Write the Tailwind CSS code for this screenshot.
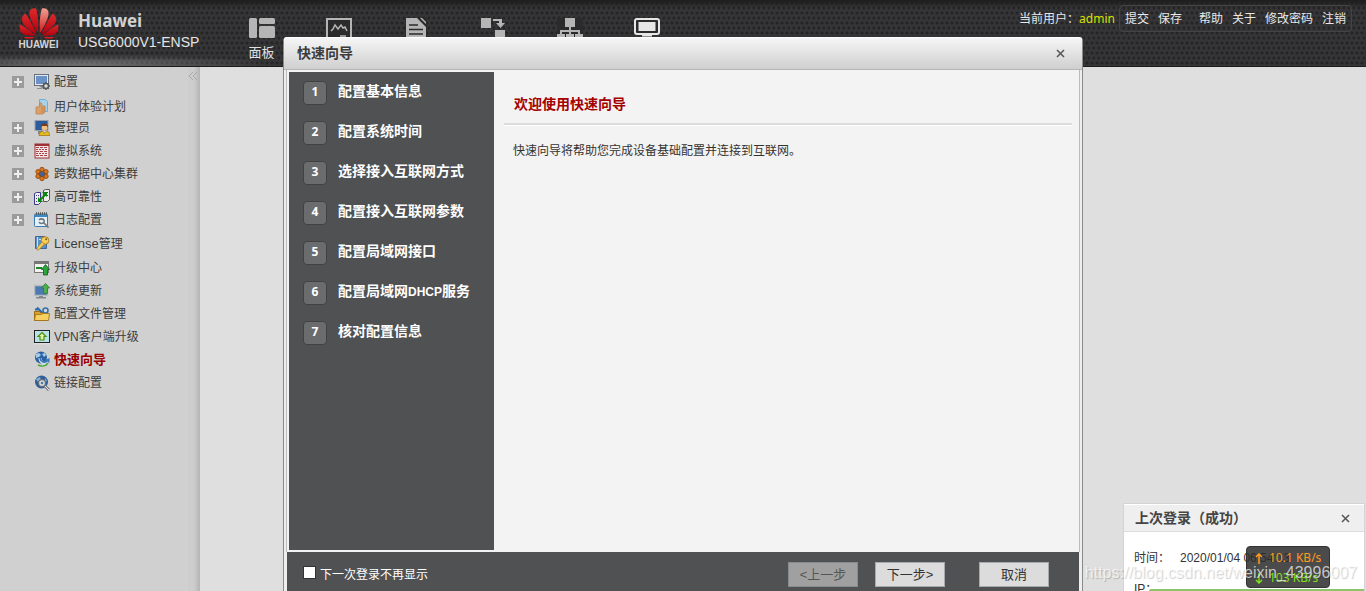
<!DOCTYPE html>
<html lang="zh-CN">
<head>
<meta charset="utf-8">
<title>USG6000V1-ENSP</title>
<script src="https://cdn.jsdelivr.net/npm/@tailwindcss/browser@4"></script>
</head>
<body class="h-screen overflow-hidden relative flex flex-col bg-[#dfdfdf] text-xs text-[#333] font-['Liberation_Sans','Noto_Sans_CJK_SC',sans-serif]">

<header class="h-[67px] shrink-0 flex relative border-b border-[#1c1c1c] bg-[#353537] bg-[linear-gradient(180deg,#1d1d1d,transparent_8px),radial-gradient(ellipse_at_85px_64px,rgba(255,255,255,0.3),transparent_190px),radial-gradient(circle_at_2px_3px,#242425_1px,transparent_2px),radial-gradient(circle_at_4px_8px,#242425_1px,transparent_2px)] bg-[size:100%_100%,100%_100%,5px_10px,5px_10px]">
  <div class="w-[223px] shrink-0 flex pl-[18px]">
    <div class="w-[41px] flex flex-col items-center pt-[7px]">
      <svg class="w-10 h-8" viewBox="0 0 40 32">
        <defs><linearGradient id="r" x1="0" y1="0" x2="0" y2="1"><stop offset="0" stop-color="#dc2a2c"/><stop offset="1" stop-color="#b4000c"/></linearGradient><linearGradient id="p" x1="0" y1="0" x2="0" y2="1"><stop offset="0" stop-color="#f0a090"/><stop offset="1" stop-color="#cc1a1e"/></linearGradient></defs>
        <g fill="url(#r)">
          <path d="M19 26C19.400 18 19.500 8 17 1.500 12.500 0 9.800 3.500 10.600 8 11.500 13 15.500 21 19 26z"/>
          <path d="M21 26C20.600 18 20.500 8 23 1.500c4.500-1.500 7.200 2 6.400 6.500C28.500 13 24.500 21 21 26z" fill="url(#p)"/>
          <path d="M17.600 27.500C15 20.500 10.500 12 6.500 6.500 2.800 8.500 2 13 4.200 16.500 7 20.500 12.500 25 17.600 27.500z"/>
          <path d="M22.400 27.500C25 20.500 29.500 12 33.500 6.500c3.700 2 4.500 6.500 2.300 10C33 20.500 27.500 25 22.400 27.500z"/>
          <path d="M16.500 28.500C12 24.500 5.500 20 .8 17.300 0 21.500 1 25.500 4.500 27.300 8 28.700 13 29 16.500 28.500z"/>
          <path d="M23.500 28.500C28 24.500 34.500 20 39.200 17.300c.8 4.200-.2 8.200-3.700 10C32 28.700 27 29 23.500 28.500z"/>
          <path d="M16 30H4.500c3 2.800 8 2.500 11.500 0z"/><path d="M24 30h11.500c-3 2.800-8 2.500-11.500 0z"/>
        </g>
      </svg>
      <span class="text-[10px] leading-3 font-bold text-[#d5d5d5]">HUAWEI</span>
    </div>
    <div class="pl-[19px] pt-[10px] text-[#e4e4e4]">
      <div class="text-[17px] leading-[22px] font-bold text-[#d2d2d2] font-['Open_Sans',sans-serif]">Huawei</div>
      <div class="text-sm leading-5">USG6000V1-ENSP</div>
    </div>
  </div>
  <nav class="flex text-[13px] text-[#e0e0e0]" aria-label="主菜单">
    <a href="#" class="w-[77px] flex flex-col items-center pt-[18px]">
      <svg class="w-[26px] h-5" viewBox="0 0 26 20" fill="#b5b5b5"><rect width="8" height="20" rx="1.5"/><rect x="10" width="16" height="6" rx="1.5"/><rect x="10" y="8" width="16" height="12" rx="1.5"/></svg>
      <span class="mt-[5px] leading-5">面板</span>
    </a>
    <a href="#" aria-label="监控" class="w-[77px] flex justify-center pt-[18px]">
      <svg class="w-[26px] h-5" viewBox="0 0 26 20" fill="none" stroke="#b5b5b5"><path fill="#2b2b2b" stroke-width="2" d="M1 20V1h24v19"/><path stroke-width="1.500" d="M5 13l2-2 2-4 3 4 3-4 2 3 2-1 2 4M14 18h6"/></svg>
    </a>
    <a href="#" aria-label="策略" class="w-[77px] flex justify-center pt-[18px]">
      <svg class="w-[22px] h-5" viewBox="0 0 22 20"><path fill="#2b2b2b" d="M0 0h22v20H0z"/><path fill="#b5b5b5" d="M1 0h11l9 9v11H1zM15 0l6 6V4l-4-4z"/><path stroke="#2b2b2b" stroke-width="1.600" d="M4 7h9M4 11.500h14M4 16h14"/></svg>
    </a>
    <a href="#" aria-label="对象" class="w-[77px] flex justify-center pt-[18px]">
      <svg class="w-[26px] h-5" viewBox="0 0 26 20" fill="#b5b5b5"><rect x="1" width="10" height="10"/><rect x="15" y="12" width="10" height="8"/><path d="M13 1h9v4h3L20.500 10 16 5h3V3h-6z"/></svg>
    </a>
    <a href="#" aria-label="网络" class="w-[77px] flex justify-center pt-[18px]">
      <svg class="w-[26px] h-5" viewBox="0 0 26 20"><path fill="#2b2b2b" d="M0 0h26v20H0z"/><g fill="#b5b5b5"><rect x="8" width="10" height="9"/><path d="M12 9h2v3h9v4h3v4h-8v-4h3v-2h-7v2h3v4H9v-4h3v-2H5v2h3v4H0v-4h3v-4h9z"/></g></svg>
    </a>
    <a href="#" aria-label="系统" class="w-[77px] flex justify-center pt-[18px]">
      <svg class="w-[26px] h-5" viewBox="0 0 26 20"><rect x="1" y="1" width="24" height="15" rx="2" fill="#2b2b2b" stroke="#e6e6e6" stroke-width="2"/><rect x="4.500" y="4" width="17" height="9" fill="#e6e6e6"/><path d="M8 17h10v1.500H8z" fill="#e6e6e6"/></svg>
    </a>
  </nav>
  <div class="ml-auto mr-[14px] mt-[5px] h-[27px] flex items-center text-[#e8e8e8] whitespace-nowrap">
    <span class="pt-px">当前用户：</span>
    <span class="pt-px text-[#d8e000] mr-1 font-['Noto_Sans',sans-serif]">admin</span>
    <div class="flex items-center h-full gap-[9px] px-[5px] pt-px border border-[#444] rounded-sm">
      <a href="#">提交</a><a href="#">保存</a>
      <a href="#" class="ml-2">帮助</a><a href="#">关于</a><a href="#">修改密码</a><a href="#">注销</a>
    </div>
  </div>
</header>

<div class="flex flex-1 min-h-0">
<aside class="w-[200px] shrink-0 flex bg-[#d0d0d0] text-[#3c3c3c]">
  <ul class="flex-1 pt-[3px] pl-3 whitespace-nowrap">
    <li class="flex items-center h-[23px]">
      <button aria-label="展开" class="size-3 bg-[#9a9b9d] flex items-center justify-center mr-[10px]"><svg class="size-3" viewBox="0 0 12 12"><path d="M2 6h8M6 2v8" stroke="#eee" stroke-width="2"/></svg></button>
      <a href="#" class="flex items-center gap-1"><svg class="size-4" viewBox="0 0 16 16"><rect x=".5" y=".5" width="14" height="11" fill="#e5e8ec" stroke="#66707c"/><path fill="#6a92c8" d="M2 2h11v8H2z"/><path fill="#8a8f96" d="M5 12h4v2H3v1h6z"/><circle cx="12" cy="12" r="2.500" fill="#ddd" stroke="#55595d" stroke-width="1.500"/><path stroke="#55595d" stroke-width="1.500" d="M12 8v1.500M12 14.500V16M8 12h1.500M14.500 12H16M9.200 9.200l1 1M14.800 9.200l-1 1M9.200 14.800l1-1M14.800 14.800l-1-1"/></svg>配置</a></li>
    <li class="flex items-center h-[23px] pl-[22px] pt-1">
      <a href="#" class="flex items-center gap-1"><svg class="size-4" viewBox="0 0 16 16"><path fill="#a8d2ea" stroke="#6eaed4" d="M5.500.5h6l2 2v10h-8z"/><path fill="#dba06a" stroke="#b97b46" stroke-width=".7" d="M2 8h3l1-4c2-1 2 1 1.500 3H11v6l-2 2H2z"/><path stroke="#b97b46" stroke-width=".7" d="M7 9h4M7 11h4M7 13h3"/></svg>用户体验计划</a></li>
    <li class="flex items-center h-[23px]">
      <button aria-label="展开" class="size-3 bg-[#9a9b9d] flex items-center justify-center mr-[10px]"><svg class="size-3" viewBox="0 0 12 12"><path d="M2 6h8M6 2v8" stroke="#eee" stroke-width="2"/></svg></button>
      <a href="#" class="flex items-center gap-1"><svg class="size-4" viewBox="0 0 16 16"><rect x="1" y=".5" width="13" height="10" fill="#2d5c9e" stroke="#9aa0a8"/><path fill="#888" d="M4 11h4v3H4z"/><circle cx="10.500" cy="7.500" r="3" fill="#f0bf86"/><path fill="#7a3d10" d="M7 8c-1-6 8-6 7 0l-1-2H8z"/><path fill="#e8b91c" stroke="#94700c" stroke-width=".7" d="M5 15.500c0-3 2-4 3.500-4l2 1.500 2-1.500c2 0 3.500 1 3.500 4z"/></svg>管理员</a></li>
    <li class="flex items-center h-[23px]">
      <button aria-label="展开" class="size-3 bg-[#9a9b9d] flex items-center justify-center mr-[10px]"><svg class="size-3" viewBox="0 0 12 12"><path d="M2 6h8M6 2v8" stroke="#eee" stroke-width="2"/></svg></button>
      <a href="#" class="flex items-center gap-1"><svg class="size-4" viewBox="0 0 16 16"><rect x="1" y="1" width="14" height="14" fill="#f3e6e6" stroke="#9c3036"/><path fill="#9c3036" d="M1 1h14v2H1z"/><path stroke="#a84248" stroke-dasharray="3 1" d="M2 4.500h12M2 8.500h12M2 12.500h12"/><path stroke="#a84248" stroke-dasharray="2 1" d="M2 6.500h12M2 10.500h12"/></svg>虚拟系统</a></li>
    <li class="flex items-center h-[23px]">
      <button aria-label="展开" class="size-3 bg-[#9a9b9d] flex items-center justify-center mr-[10px]"><svg class="size-3" viewBox="0 0 12 12"><path d="M2 6h8M6 2v8" stroke="#eee" stroke-width="2"/></svg></button>
      <a href="#" class="flex items-center gap-1"><svg class="size-4" viewBox="0 0 16 16"><g fill="#dc761c" stroke="#8a4208" stroke-width=".8"><circle cx="8" cy="3.500" r="2.200"/><circle cx="8" cy="12.500" r="2.200"/><circle cx="4" cy="5.700" r="2.200"/><circle cx="12" cy="5.700" r="2.200"/><circle cx="4" cy="10.300" r="2.200"/><circle cx="12" cy="10.300" r="2.200"/></g><circle cx="8" cy="8" r="2.500" fill="#3c66b0" stroke="#70492c"/></svg>跨数据中心集群</a></li>
    <li class="flex items-center h-[23px]">
      <button aria-label="展开" class="size-3 bg-[#9a9b9d] flex items-center justify-center mr-[10px]"><svg class="size-3" viewBox="0 0 12 12"><path d="M2 6h8M6 2v8" stroke="#eee" stroke-width="2"/></svg></button>
      <a href="#" class="flex items-center gap-1"><svg class="size-4" viewBox="0 0 16 16"><path fill="#eee" stroke="#3a3a88" d="M.5 4.500l2-1h4v10l-2 2h-4z"/><path fill="#eee" stroke="#555" d="M9.500 1.500l2-1h4v10l-2 2h-4z"/><path stroke="#3a3a88" stroke-dasharray="1 1" d="M2 6.500h3M2 9.500h3M2 12.500h3M11 3.500h3M11 6.500h3"/><path d="M6 11l6-6" stroke="#0b840f" stroke-width="1.800"/><path fill="#0b840f" d="M8 3h5v5zM4 8l5 5H4z"/></svg>高可靠性</a></li>
    <li class="flex items-center h-[23px]">
      <button aria-label="展开" class="size-3 bg-[#9a9b9d] flex items-center justify-center mr-[10px]"><svg class="size-3" viewBox="0 0 12 12"><path d="M2 6h8M6 2v8" stroke="#eee" stroke-width="2"/></svg></button>
      <a href="#" class="flex items-center gap-1"><svg class="size-4" viewBox="0 0 16 16"><rect x=".5" y="2" width="13" height="12.500" rx="1" fill="#e4f0f8" stroke="#3a7db4"/><path fill="#3a8cc8" d="M1 2h12v3H1z"/><path stroke="#555" stroke-dasharray="1 1" stroke-width="2.500" d="M2 1.500h11"/><path fill="none" stroke="#6e7478" stroke-width="1.600" d="M5 8c2-2 6-1 5 2-1 2-4 2-5 0M10 11l4.500 4.500"/></svg>日志配置</a></li>
    <li class="flex items-center h-6 pl-[22px] pt-px">
      <a href="#" class="flex items-center gap-1"><svg class="size-4" viewBox="0 0 16 16"><path fill="#5c8fc6" stroke="#3d6796" d="M1.500 1.500h9l2 2v10h-11z"/><path stroke="#d4e3f2" d="M3.500 2v11M5 4.500h5"/><circle cx="11" cy="5.500" r="3.800" fill="#f6cf58" stroke="#b3801c"/><circle cx="12.200" cy="4.200" r="1" fill="#7c5a14"/><path fill="#f6cf58" stroke="#b3801c" stroke-width=".8" d="M8 7l2.500 2-6 6H3v-2z"/></svg><span><span class="text-[13px]">License</span>管理</span></a></li>
    <li class="flex items-center h-6 pl-[22px] pt-px">
      <a href="#" class="flex items-center gap-1"><svg class="size-4" viewBox="0 0 16 16"><rect x=".5" y="1.500" width="14" height="11" fill="#f1f1f1" stroke="#777"/><path fill="#777" d="M1 2h13v2H1z"/><path fill="#168a26" d="M2 7h6v2H2z"/><path fill="#2aa63a" stroke="#0b5e17" stroke-width=".8" d="M11.500 4.500l4 5H13.500V15h-4V9.500h-2z"/></svg>升级中心</a></li>
    <li class="flex items-center h-[23px] pl-[22px]">
      <a href="#" class="flex items-center gap-1"><svg class="size-4" viewBox="0 0 16 16"><rect x=".5" y="2.500" width="13" height="10" fill="#4c79b4" stroke="#b5bac0" stroke-width="1.500"/><path fill="#81878d" d="M5 13h4v1h3v1.500H2V14h3z"/><path fill="#4cae4e" stroke="#2a7d2e" stroke-width=".8" d="M11.500.5l4 4.500H13.500v5.500h-4V5h-2z"/></svg>系统更新</a></li>
    <li class="flex items-center h-[23px] pl-[22px]">
      <a href="#" class="flex items-center gap-1"><svg class="size-4" viewBox="0 0 16 16"><path fill="#dba22c" stroke="#9d6c10" d="M.5 14.500v-9h5l1 1h7v8z"/><path stroke="#2f6aa8" stroke-width="2" d="M3 1.500l5 5M1 3.500h3"/><circle cx="11.500" cy="4.500" r="2.500" fill="#ccdae8" stroke="#3d6f9f" stroke-width="1.600"/><path fill="#f7cf63" stroke="#9d6c10" stroke-width=".8" d="M.5 14.500l1-6h6l1.500-1h6.500l-1 7z"/></svg>配置文件管理</a></li>
    <li class="flex items-center h-[23px] pl-[22px]">
      <a href="#" class="flex items-center gap-1"><svg class="size-4" viewBox="0 0 16 16"><rect x=".5" y="1.500" width="15" height="12" fill="#b8e2e6" stroke="#222"/><path fill="#ddd" d="M0 14h16v1.500H0z"/><path fill="#dff2a4" stroke="#4a9012" stroke-width="1.200" d="M8 3.500l4 4h-2V11H6V7.500H4z"/></svg>VPN客户端升级</a></li>
    <li class="flex items-center h-[23px] pl-[22px]">
      <a href="#" aria-current="page" class="flex items-center gap-1 text-[13px] font-bold text-[#990000]"><svg class="size-4" viewBox="0 0 16 16"><circle cx="7" cy="6.500" r="6" fill="#2a61a3"/><path fill="#a7cbe8" d="M2 3l3-1 2 2-2 2-3 1zM8 3l3-1 1 2-2 2z"/><path fill="none" stroke="#cfe0f0" stroke-width="3" d="M6 7c0 5 5 6 8 3"/><path fill="none" stroke="#3d77b8" stroke-width="1.800" d="M6 7c1 4 4 5 7 3"/><path fill="#3d77b8" d="M11 9l4.500-2v5z"/><path fill="none" stroke="#48aa38" stroke-width="1.500" d="M4 14c4 2 8 1 10-2"/></svg>快速向导</a></li>
    <li class="flex items-center h-[23px] pl-[22px]">
      <a href="#" class="flex items-center gap-1"><svg class="size-4" viewBox="0 0 16 16"><circle cx="7.500" cy="7" r="6.500" fill="#2d5e98"/><path fill="#86b2d8" d="M2 4l4-2 1 3-3 2zM11 3l2 3-2 1z"/><circle cx="8" cy="8" r="3.500" fill="#d7dde2" stroke="#6b6f73" stroke-width="1.300"/><circle cx="8" cy="8" r="1.300" fill="#50799f"/><path stroke="#7b7f83" stroke-width="3" d="M11 11l4 4"/><path stroke="#e6e6e6" d="M11 11l4 4"/></svg>链接配置</a></li>
  </ul>
  <div class="w-3 bg-[linear-gradient(90deg,#cdcdcd_50%,#b4b4b4)]"><button aria-label="收起" class="block h-[18px] w-3"><svg class="w-[10px] h-[10px]" viewBox="0 0 10 10" fill="none" stroke="#aaa"><path d="M5 1L1 5l4 4M9 1L5 5l4 4"/></svg></button></div>
</aside>
<main class="flex-1"></main>
</div>

<!-- wizard dialog -->
<section role="dialog" aria-label="快速向导" class="absolute inset-x-0 top-[37px] bottom-0 mx-auto w-[800px] flex flex-col bg-[#eeeeee] border-x border-t border-[#8a8a8a] border-t-white rounded-t-sm">
  <div class="h-8 shrink-0 flex items-center justify-between pl-[13px] pr-[17px] pb-px border-b border-[#b5b5b5] bg-linear-to-b from-[#f6f6f6] to-[#cfcfcf]">
    <h1 class="text-sm font-bold text-[#3c3c3c]">快速向导</h1>
    <button aria-label="关闭"><svg class="size-[9px]" viewBox="0 0 9 9"><path d="M1 1l7 7M8 1L1 8" stroke="#555" stroke-width="1.500"/></svg></button>
  </div>
  <div class="flex-1 min-h-0 flex flex-col px-[2px]">
    <div class="h-[482px] shrink-0 flex border-x border-[#bbb] bg-[#f3f3f3] pl-[2px] pr-[7px] pt-[2px] pb-[2px]">
      <ol class="w-[205px] shrink-0 bg-[#505153] pl-[14px] pt-[9px] text-sm font-bold text-white">
        <li class="flex h-10 gap-[11px]"><span class="size-6 pb-[2px] flex items-center justify-center text-xs rounded-sm border border-[#414244] bg-[#6b6c6e] font-['Open_Sans',sans-serif]">1</span><span class="leading-5">配置基本信息</span></li>
        <li class="flex h-10 gap-[11px]"><span class="size-6 pb-[2px] flex items-center justify-center text-xs rounded-sm border border-[#414244] bg-[#6b6c6e] font-['Open_Sans',sans-serif]">2</span><span class="leading-5">配置系统时间</span></li>
        <li class="flex h-10 gap-[11px]"><span class="size-6 pb-[2px] flex items-center justify-center text-xs rounded-sm border border-[#414244] bg-[#6b6c6e] font-['Open_Sans',sans-serif]">3</span><span class="leading-5">选择接入互联网方式</span></li>
        <li class="flex h-10 gap-[11px]"><span class="size-6 pb-[2px] flex items-center justify-center text-xs rounded-sm border border-[#414244] bg-[#6b6c6e] font-['Open_Sans',sans-serif]">4</span><span class="leading-5">配置接入互联网参数</span></li>
        <li class="flex h-10 gap-[11px]"><span class="size-6 pb-[2px] flex items-center justify-center text-xs rounded-sm border border-[#414244] bg-[#6b6c6e] font-['Open_Sans',sans-serif]">5</span><span class="leading-5">配置局域网接口</span></li>
        <li class="flex h-10 gap-[11px]"><span class="size-6 pb-[2px] flex items-center justify-center text-xs rounded-sm border border-[#414244] bg-[#6b6c6e] font-['Open_Sans',sans-serif]">6</span><span class="leading-5">配置局域网<span class="text-xs">DHCP</span>服务</span></li>
        <li class="flex h-10 gap-[11px]"><span class="size-6 pb-[2px] flex items-center justify-center text-xs rounded-sm border border-[#414244] bg-[#6b6c6e] font-['Open_Sans',sans-serif]">7</span><span class="leading-5">核对配置信息</span></li>
      </ol>
      <div class="flex-1 pl-[10px] pt-[22px]">
        <h2 class="pl-[10px] h-[31px] leading-5 text-sm font-bold text-[#a40000] border-b-2 border-[#dcdcdc] shadow-[0_1px_0_#fff]">欢迎使用快速向导</h2>
        <p class="pl-[9px] pt-4 leading-5">快速向导将帮助您完成设备基础配置并连接到互联网。</p>
      </div>
    </div>
    <div class="flex-1 mx-px bg-[#505153] flex items-start pl-4 pr-[30px] pt-[10px] text-[13px]">
      <label class="flex items-start gap-1 pt-1 leading-5 text-xs text-white"><input type="checkbox" class="appearance-none size-[13px] bg-white border border-[#333]"><span class="leading-[18px]">下一次登录不再显示</span></label>
      <button disabled class="ml-auto w-[70px] h-[25px] bg-[#a0a0a0] border border-[#8a8b8e] text-[#555]">&lt;上一步</button>
      <button class="ml-[17px] w-[70px] h-[25px] bg-[#dcdcdc] border border-[#a8aaae] text-[#333]">下一步&gt;</button>
      <button class="ml-[34px] w-[70px] h-[25px] bg-[#dcdcdc] border border-[#a8aaae] text-[#333]">取消</button>
    </div>
  </div>
</section>

<!-- last login notice -->
<section class="absolute right-px bottom-0 w-[242px] h-[88px] overflow-hidden bg-white border border-b-0 border-[#d4d4d4]">
  <div class="mt-px h-[27px] flex items-center justify-between pl-[11px] pr-[14px] bg-[#efefef] border-b border-[#ddd]">
    <h2 class="text-sm font-bold text-[#444]">上次登录（成功）</h2>
    <button aria-label="关闭"><svg class="size-[9px]" viewBox="0 0 9 9"><path d="M1 1l7 7M8 1L1 8" stroke="#555" stroke-width="1.500"/></svg></button>
  </div>
  <dl class="grid grid-cols-[46px_1fr] pl-[10px] pt-4 leading-5 gap-y-[11px]">
    <dt>时间：</dt><dd>2020/01/04 06:54:13</dd>
    <dt>IP：</dt><dd></dd>
  </dl>
</section>
<div class="absolute right-[2px] bottom-0 w-[215px] h-[2px] bg-[#8cc46c] rounded-tl-sm"></div>
<div class="absolute right-9 bottom-[3px] w-[84px] h-[42px] rounded-sm bg-[#2b2b2b]/85 border border-[#333] pt-px pl-2 font-['Noto_Sans',sans-serif] text-xs leading-5">
  <div class="flex items-center gap-[6px] text-[#ff9a1f]"><svg class="w-2 h-[11px]" viewBox="0 0 8 11" fill="none" stroke="currentColor" stroke-width="1.500"><path d="M4 11V1M1 4l3-3 3 3"/></svg>10.1 KB/s</div>
  <div class="flex items-center gap-[6px] text-[#7ee01e]"><svg class="w-2 h-[11px]" viewBox="0 0 8 11" fill="none" stroke="currentColor" stroke-width="1.500"><path d="M4 0v10M1 7l3 3 3-3"/></svg>103 KB/s</div>
</div>
<div class="absolute right-[9px] bottom-[6px] text-base leading-6 text-white/70 [text-shadow:1px_1px_1px_rgba(0,0,0,0.2)]">https://blog.csdn.net/weixin_43996007</div>
</body>
</html>
